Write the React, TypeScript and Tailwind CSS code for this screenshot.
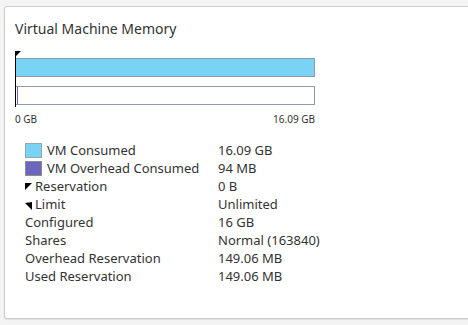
export default function App() {
  const rows: { label: string; value: string; mark?: 'consumed' | 'overhead' | 'reservation' | 'limit' }[] = [
    { label: 'VM Consumed', value: '16.09 GB', mark: 'consumed' },
    { label: 'VM Overhead Consumed', value: '94 MB', mark: 'overhead' },
    { label: 'Reservation', value: '0 B', mark: 'reservation' },
    { label: 'Limit', value: 'Unlimited', mark: 'limit' },
    { label: 'Configured', value: '16 GB' },
    { label: 'Shares', value: 'Normal (163840)' },
    { label: 'Overhead Reservation', value: '149.06 MB' },
    { label: 'Used Reservation', value: '149.06 MB' },
  ];

  return (
    <div className="h-[325px] w-[468px] overflow-hidden bg-[#f4f4f4] pl-[4px] pt-[6px] font-['Noto_Sans',sans-serif] text-[#333]">
      <div className="h-[313px] w-[480px] rounded-[3px] border border-[#ccc] bg-white pl-[10px] pt-[12px] shadow-[0_1px_1px_rgba(0,0,0,0.08)]">
        <h2 className="text-[14px] leading-[20px] text-[#333]">Virtual Machine Memory</h2>

        <div className="relative mt-[12px] w-[300px]">
          <div className="absolute left-0 top-0 h-[56px] w-[1px] bg-black" />
          <div className="absolute left-0 top-0 h-0 w-0 border-r-[6px] border-t-[6px] border-r-transparent border-t-black" />
          <div className="flex flex-col gap-[9px] pt-[7px]">
            <div className="h-[19px] border border-[#8c9ba5] bg-[#79d3f5]" />
            <div className="h-[19px] border border-[#8c9ba5] bg-white pl-[1px]">
              <div className="h-full w-[1px] bg-[#6b66c0]" />
            </div>
          </div>
          <div className="mt-[8px] flex justify-between text-[10px] leading-[12px] text-[#333]">
            <span>0 GB</span>
            <span>16.09 GB</span>
          </div>
        </div>

        <div className="mt-[16px] grid grid-cols-[193px_auto] pl-[10px] text-[13px] leading-[18px]">
          {rows.map((r) => (
            <div key={r.label} className="contents">
              <div className="flex items-center">
                {r.mark === 'consumed' && (
                  <span className="mr-[5px] inline-block h-[15px] w-[17px] border border-[#9aa6ad] bg-[#79d3f5]" />
                )}
                {r.mark === 'overhead' && (
                  <span className="mr-[5px] inline-block h-[15px] w-[17px] border border-[#8c8c8c] bg-[#6b66c0]" />
                )}
                {r.mark === 'reservation' && (
                  <svg width="7" height="7" viewBox="0 0 7 7" className="mr-[3px] mt-[1px]">
                    <polygon points="0,0 7,0 0,7" fill="#000" />
                  </svg>
                )}
                {r.mark === 'limit' && (
                  <svg width="7" height="8" viewBox="0 0 7 8" className="mr-[3px] mt-[4px]">
                    <polygon points="0,1 7,0 7,8" fill="#000" />
                  </svg>
                )}
                <span>{r.label}</span>
              </div>
              <div>{r.value}</div>
            </div>
          ))}
        </div>
      </div>
    </div>
  );
}
